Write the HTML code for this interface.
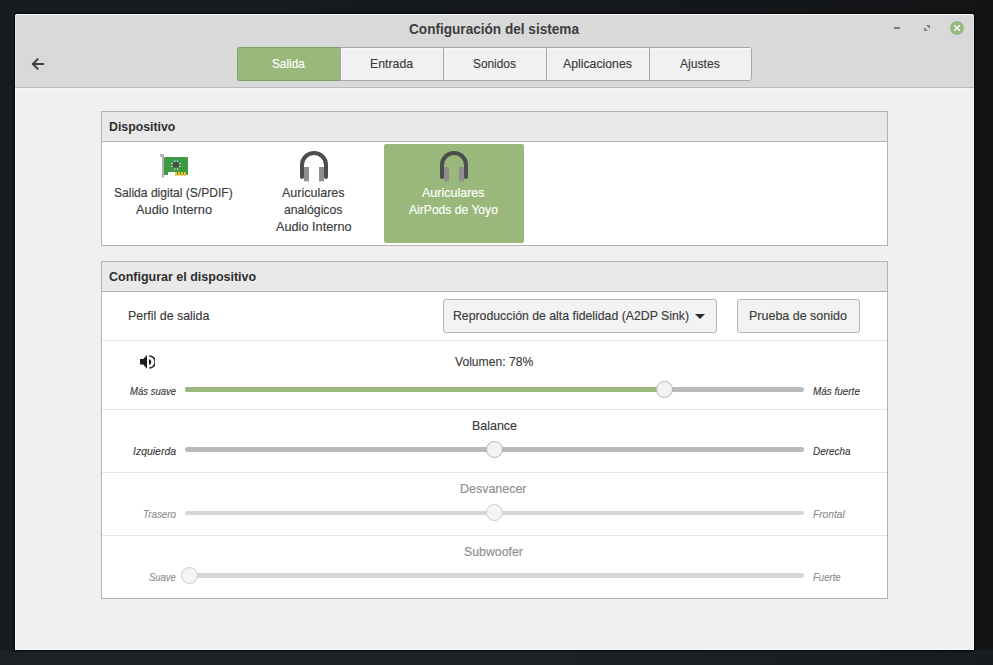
<!DOCTYPE html>
<html><head><meta charset="utf-8">
<style>
*{margin:0;padding:0;box-sizing:border-box}
html,body{width:993px;height:665px;overflow:hidden;background:linear-gradient(90deg,#191c1f,#16191c 50%,#121416);font-family:"Liberation Sans",sans-serif;color:#3b3b3b;position:relative}
.a{position:absolute}
.t{position:absolute;white-space:nowrap;transform-origin:0 0;font-family:"Liberation Sans",sans-serif;-webkit-text-stroke:0.15px currentColor}
.sep{position:absolute;left:102px;width:785px;height:1px;background:#e6e6e6}
.tr{position:absolute;left:185px;width:619px;height:5px;border-radius:2.5px;background:#bababa}
.kn{position:absolute;width:17px;height:17px;border-radius:50%;background:#f3f3f3;border:1px solid #b3b3b3}
</style></head><body>
<!-- bg texture approx -->
<div class="a" style="left:0;top:650px;width:993px;height:15px;background:linear-gradient(90deg,#1c2124,#1d2225 50%,#181c1f)"></div>
<!-- window shadow + body -->
<div class="a" style="left:15px;top:14px;width:959px;height:636px;box-shadow:0 0 1.5px 0.8px #050607;border-radius:3px 3px 0 0"></div>
<div class="a" style="left:15px;top:14px;width:959px;height:636px;background:#fbfbfb;border-radius:2px 2px 0 0"></div>
<div class="a" style="left:16px;top:15px;width:957px;height:72px;background:#d9d9d9"></div>
<div class="a" style="left:15px;top:87px;width:959px;height:1px;background:#b9b9b9"></div>
<div class="a" style="left:15px;top:15px;width:1px;height:72px;background:#e4e4e4"></div>
<div class="a" style="left:973px;top:15px;width:1px;height:72px;background:#e4e4e4"></div>
<div class="a" style="left:16px;top:88px;width:957px;height:561px;background:#f0f0f0"></div>
<div class="a" style="left:16px;top:88px;width:957px;height:1px;background:#f6f6f6"></div>

<!-- back arrow -->
<svg class="a" style="left:30px;top:56px" width="16" height="16" viewBox="0 0 16 16"><path d="M8.2 2.6 L2.8 8 L8.2 13.4 M3 8 H14" fill="none" stroke="#3f3f3f" stroke-width="2"/></svg>
<!-- window controls -->
<div class="a" style="left:894px;top:26.6px;width:6px;height:2.4px;background:#7a7a7a"></div>
<svg class="a" style="left:924px;top:25px" width="6" height="6" viewBox="0 0 6 6"><path d="M2 0 H6 V4 Z M0 2 V6 H4 Z" fill="#858585"/></svg>
<svg class="a" style="left:949px;top:20px" width="16" height="16" viewBox="0 0 16 16"><circle cx="8" cy="8" r="7" fill="#9ab87c"/><path d="M5.2 5.2 L10.8 10.8 M10.8 5.2 L5.2 10.8" stroke="#fff" stroke-width="1.35"/></svg>

<!-- tabs -->
<div class="a" style="left:340px;top:47px;width:412px;height:34px;border:1px solid #a8a8a8;border-radius:0 3px 3px 0;background:#f1f1f1"></div>
<div class="a" style="left:341px;top:48px;width:410px;height:1px;background:#f8f8f8"></div>
<div class="a" style="left:237px;top:47px;width:104px;height:34px;background:#9ab87c;border:1px solid #80a066;border-right:none;border-radius:3px 0 0 3px"></div>
<div class="a" style="left:340px;top:47px;width:1px;height:34px;background:#a8a8a8"></div>
<div class="a" style="left:443px;top:48px;width:1px;height:32px;background:#a8a8a8"></div>
<div class="a" style="left:546px;top:48px;width:1px;height:32px;background:#a8a8a8"></div>
<div class="a" style="left:649px;top:48px;width:1px;height:32px;background:#a8a8a8"></div>

<!-- frame 1 -->
<div class="a" style="left:101px;top:111px;width:787px;height:135px;background:#fff;border:1px solid #b2b2b2"></div>
<div class="a" style="left:102px;top:112px;width:785px;height:29px;background:#e9e9e9"></div>
<div class="a" style="left:102px;top:141px;width:785px;height:1px;background:#b2b2b2"></div>
<div class="a" style="left:384px;top:144px;width:140px;height:99px;background:#9ab87c;border-radius:2px"></div>

<!-- card icon -->
<svg class="a" style="left:156px;top:150px" width="36" height="30" viewBox="0 0 36 30">
  <path d="M4 4.3 H8 V27.5 H6 V6.8 H4 Z" fill="#b0b0b0"/>
  <path d="M8 8 Q8 7 9 7 H31 Q32 7 32 8 V24 Q32 25 31 25 H19 V22 H12 V25 H9 Q8 25 8 24 Z" fill="#3d9a42"/>
  <rect x="17" y="12.2" width="5.8" height="5.4" rx="1" fill="#4a4a4a"/>
  <g fill="#d0d0d0"><rect x="18.3" y="10" width="0.9" height="2"/><rect x="21" y="10" width="0.9" height="2"/><rect x="18.3" y="18" width="0.9" height="2"/><rect x="21" y="18" width="0.9" height="2"/><rect x="15" y="13.2" width="2" height="0.9"/><rect x="15" y="16" width="2" height="0.9"/><rect x="23" y="13.2" width="2" height="0.9"/><rect x="23" y="16" width="2" height="0.9"/></g>
  <g fill="#f7bf32"><rect x="19" y="22" width="2" height="4"/><rect x="22" y="22" width="2" height="4"/><rect x="25" y="22" width="2" height="4"/><rect x="28" y="22" width="2" height="4"/></g>
</svg>
<!-- headphones -->
<svg class="a" style="left:296px;top:147px" width="36" height="38" viewBox="0 0 36 38">
  <path d="M6 30 V18 A12 12 0 0 1 30 18 V30" fill="none" stroke="#4d4d4d" stroke-width="4" stroke-linecap="round"/>
  <rect x="8" y="20" width="5" height="14.3" fill="#8f8f8f"/><rect x="23" y="20" width="5" height="14.3" fill="#8f8f8f"/>
</svg>
<svg class="a" style="left:436px;top:147px" width="36" height="38" viewBox="0 0 36 38">
  <path d="M6 30 V18 A12 12 0 0 1 30 18 V30" fill="none" stroke="#4d4d4d" stroke-width="4" stroke-linecap="round"/>
  <rect x="8" y="20" width="5" height="14.3" fill="#8f8f8f"/><rect x="23" y="20" width="5" height="14.3" fill="#8f8f8f"/>
</svg>

<!-- frame 2 -->
<div class="a" style="left:101px;top:261px;width:787px;height:338px;background:#fff;border:1px solid #b2b2b2"></div>
<div class="a" style="left:102px;top:262px;width:785px;height:29px;background:#e9e9e9"></div>
<div class="a" style="left:102px;top:291px;width:785px;height:1px;background:#b2b2b2"></div>
<div class="sep" style="top:340px"></div>
<div class="sep" style="top:409px"></div>
<div class="sep" style="top:472px"></div>
<div class="sep" style="top:535px"></div>

<!-- combo + button -->
<div class="a" style="left:443px;top:299px;width:274px;height:34px;background:#f3f3f3;border:1px solid #b5b5b5;border-radius:3px"></div>
<svg class="a" style="left:695px;top:314px" width="10" height="5" viewBox="0 0 10 5"><path d="M0 0 H10 L5 5 Z" fill="#2a2a2a"/></svg>
<div class="a" style="left:737px;top:299px;width:123px;height:34px;background:#f3f3f3;border:1px solid #b5b5b5;border-radius:3px"></div>

<!-- speaker icon -->
<svg class="a" style="left:140px;top:355px" width="15" height="14" viewBox="0 0 15 14">
  <path d="M0 4.1 H3.2 L7 0 V13.7 L3.2 9.6 H0 Z" fill="#1e1e1e"/>
  <path d="M9 4.2 A2.2 2.8 0 0 1 9 9.8 Z" fill="#1e1e1e"/>
  <path d="M9.3 1.1 A5.9 5.9 0 0 1 9.3 12.9" fill="none" stroke="#1e1e1e" stroke-width="1.5"/>
</svg>

<!-- sliders -->
<div class="tr" style="top:387px"></div>
<div class="a" style="left:185px;top:387px;width:480px;height:5px;border-radius:2.5px 0 0 2.5px;background:#9ab87c"></div>
<div class="kn" style="left:656px;top:381px"></div>

<div class="tr" style="top:447px"></div>
<div class="kn" style="left:486px;top:441px"></div>

<div class="tr" style="top:510.5px;height:4.5px;background:#d6d6d6"></div>
<div class="kn" style="left:486px;top:504px;background:#f5f5f5;border-color:#cdcdcd"></div>

<div class="tr" style="top:573.3px;height:4.5px;background:#d6d6d6"></div>
<div class="kn" style="left:181px;top:567px;background:#f5f5f5;border-color:#cdcdcd"></div>

<div class="t" style="left:408.60px;top:22.10px;font-size:14.5px;line-height:14.5px;font-weight:bold;font-style:normal;color:#3d3d3d;transform:scaleX(0.9379);-webkit-text-stroke:0">Configuración del sistema</div>
<div class="t" style="left:272.00px;top:57.00px;font-size:13px;line-height:13px;font-weight:normal;font-style:normal;color:#ffffff;transform:scaleX(0.9077)">Salida</div>
<div class="t" style="left:369.55px;top:57.00px;font-size:13px;line-height:13px;font-weight:normal;font-style:normal;color:#3b3b3b;transform:scaleX(0.9470)">Entrada</div>
<div class="t" style="left:473.20px;top:57.00px;font-size:13px;line-height:13px;font-weight:normal;font-style:normal;color:#3b3b3b;transform:scaleX(0.9120)">Sonidos</div>
<div class="t" style="left:563.10px;top:57.10px;font-size:13px;line-height:13px;font-weight:normal;font-style:normal;color:#3b3b3b;transform:scaleX(0.9430)">Aplicaciones</div>
<div class="t" style="left:680.20px;top:57.00px;font-size:13px;line-height:13px;font-weight:normal;font-style:normal;color:#3b3b3b;transform:scaleX(0.9320)">Ajustes</div>
<div class="t" style="left:108.60px;top:120.70px;font-size:12.5px;line-height:12.5px;font-weight:bold;font-style:normal;color:#2f2f2f;transform:scaleX(0.9832);-webkit-text-stroke:0">Dispositivo</div>
<div class="t" style="left:114.10px;top:185.80px;font-size:13px;line-height:13px;font-weight:normal;font-style:normal;color:#3b3b3b;transform:scaleX(0.9283)">Salida digital (S/PDIF)</div>
<div class="t" style="left:136.20px;top:203.00px;font-size:13px;line-height:13px;font-weight:normal;font-style:normal;color:#3b3b3b;transform:scaleX(0.9831)">Audio Interno</div>
<div class="t" style="left:282.20px;top:185.80px;font-size:13px;line-height:13px;font-weight:normal;font-style:normal;color:#3b3b3b;transform:scaleX(0.9615)">Auriculares</div>
<div class="t" style="left:284.30px;top:203.00px;font-size:13px;line-height:13px;font-weight:normal;font-style:normal;color:#3b3b3b;transform:scaleX(0.9385)">analógicos</div>
<div class="t" style="left:276.30px;top:220.00px;font-size:13px;line-height:13px;font-weight:normal;font-style:normal;color:#3b3b3b;transform:scaleX(0.9779)">Audio Interno</div>
<div class="t" style="left:422.30px;top:186.00px;font-size:13px;line-height:13px;font-weight:normal;font-style:normal;color:#ffffff;transform:scaleX(0.9615)">Auriculares</div>
<div class="t" style="left:409.20px;top:203.00px;font-size:13px;line-height:13px;font-weight:normal;font-style:normal;color:#ffffff;transform:scaleX(0.9318)">AirPods de Yoyo</div>
<div class="t" style="left:108.50px;top:270.80px;font-size:12.5px;line-height:12.5px;font-weight:bold;font-style:normal;color:#2f2f2f;transform:scaleX(0.9993);-webkit-text-stroke:0">Configurar el dispositivo</div>
<div class="t" style="left:128.35px;top:309.30px;font-size:13px;line-height:13px;font-weight:normal;font-style:normal;color:#3b3b3b;transform:scaleX(0.9549)">Perfil de salida</div>
<div class="t" style="left:453.36px;top:308.70px;font-size:13px;line-height:13px;font-weight:normal;font-style:normal;color:#3b3b3b;transform:scaleX(0.9449)">Reproducción de alta fidelidad (A2DP Sink)</div>
<div class="t" style="left:749.14px;top:308.70px;font-size:13px;line-height:13px;font-weight:normal;font-style:normal;color:#3b3b3b;transform:scaleX(0.9605)">Prueba de sonido</div>
<div class="t" style="left:455.10px;top:355.10px;font-size:13px;line-height:13px;font-weight:normal;font-style:normal;color:#3b3b3b;transform:scaleX(0.9327)">Volumen: 78%</div>
<div class="t" style="left:129.50px;top:386.00px;font-size:11px;line-height:11px;font-weight:normal;font-style:italic;color:#3b3b3b;transform:scaleX(0.8667)">Más suave</div>
<div class="t" style="left:813.00px;top:385.50px;font-size:11px;line-height:11px;font-weight:normal;font-style:italic;color:#3b3b3b;transform:scaleX(0.9026)">Más fuerte</div>
<div class="t" style="left:471.64px;top:418.70px;font-size:13px;line-height:13px;font-weight:normal;font-style:normal;color:#3b3b3b;transform:scaleX(0.9574)">Balance</div>
<div class="t" style="left:132.90px;top:446.00px;font-size:11px;line-height:11px;font-weight:normal;font-style:italic;color:#3b3b3b;transform:scaleX(0.9505)">Izquierda</div>
<div class="t" style="left:813.30px;top:446.00px;font-size:11px;line-height:11px;font-weight:normal;font-style:italic;color:#3b3b3b;transform:scaleX(0.8997)">Derecha</div>
<div class="t" style="left:460.44px;top:481.90px;font-size:13px;line-height:13px;font-weight:normal;font-style:normal;color:#8e8e8e;transform:scaleX(0.9589)">Desvanecer</div>
<div class="t" style="left:142.70px;top:508.60px;font-size:11px;line-height:11px;font-weight:normal;font-style:italic;color:#8e8e8e;transform:scaleX(0.8873)">Trasero</div>
<div class="t" style="left:813.30px;top:508.60px;font-size:11px;line-height:11px;font-weight:normal;font-style:italic;color:#8e8e8e;transform:scaleX(0.9255)">Frontal</div>
<div class="t" style="left:464.30px;top:545.00px;font-size:13px;line-height:13px;font-weight:normal;font-style:normal;color:#8e8e8e;transform:scaleX(0.9471)">Subwoofer</div>
<div class="t" style="left:149.00px;top:571.80px;font-size:11px;line-height:11px;font-weight:normal;font-style:italic;color:#8e8e8e;transform:scaleX(0.8593)">Suave</div>
<div class="t" style="left:813.30px;top:571.80px;font-size:11px;line-height:11px;font-weight:normal;font-style:italic;color:#8e8e8e;transform:scaleX(0.8682)">Fuerte</div>
</body></html>
